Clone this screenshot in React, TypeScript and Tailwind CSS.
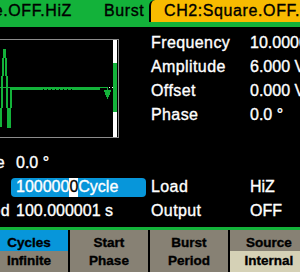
const PARAMS: [string, string][] = [
  ['Frequency', '10.000000 kHz'],
  ['Amplitude', '6.000 Vpp'],
  ['Offset', '0.000 VDC'],
  ['Phase', '0.0 °'],
  ['', ''],
  ['', ''],
  ['Load', 'HiZ'],
  ['Output', 'OFF']
]

function Waveform() {
  // y is page y - 40 (top of the scope box)
  const notches = [0, 1, 2, 3, 4, 5, 6, 7]
  return (
    <svg width="113" height="97" viewBox="0 0 113 97" className="shrink-0" shapeRendering="crispEdges">
      <g fill="#13b23a">
        {/* burst */}
        <rect x="3" y="9" width="3" height="9" />
        <rect x="2" y="18" width="1.5" height="18" />
        <rect x="5" y="18" width="2" height="18" />
        <rect x="1" y="36" width="2" height="32" />
        <rect x="6" y="36" width="2" height="32" />
        <rect x="0" y="68" width="2" height="19" />
        <rect x="7" y="68" width="4" height="20" />
        <rect x="10" y="47" width="2" height="21" />
        {/* baseline */}
        <rect x="0" y="46.5" width="10" height="1.5" />
        <rect x="10" y="47" width="90" height="3" />
        <rect x="100" y="47" width="8" height="1" />
        <rect x="107" y="47" width="1" height="3" />
        {/* trigger marker */}
        <rect x="104" y="50" width="7" height="2" />
        <rect x="105" y="52" width="5" height="3" />
        <rect x="106" y="55" width="3" height="2" />
        <rect x="107" y="57" width="1" height="2" />
      </g>
      <g fill="#000">
        {notches.map((i) => (
          <rect key={i} x={42.7 + i * 4} y="48.6" width="1.3" height="1.4" />
        ))}
      </g>
      <rect x="109" y="47" width="1" height="1" fill="#fff" />
      <rect x="112" y="47" width="1" height="1" fill="#fff" />
    </svg>
  )
}

function SoftKey({
  top,
  bottom,
  topBg,
  bottomBg,
  className = ''
}: {
  top: string
  bottom: string
  topBg: string
  bottomBg: string
  className?: string
}) {
  return (
    <div className={`w-[78px] shrink-0 flex flex-col text-[13.5px] leading-[15px] font-bold text-black text-center ${className}`}>
      <div className={`h-[21px] pt-[4.5px] ${topBg}`}>{top}</div>
      <div className={`flex-1 pt-[1.5px] ${bottomBg}`}>{bottom}</div>
    </div>
  )
}

export default function App() {
  return (
    <div className="w-[300px] h-[272px] overflow-hidden bg-black flex flex-col font-['Liberation_Sans',Arial,sans-serif] [-webkit-text-stroke:0.35px_currentColor]">
      {/* channel bar */}
      <div className="h-[27px] shrink-0 bg-[#13b23a] flex items-start text-[16px] leading-[22px] tracking-[0.6px] text-black">
        <div className="w-[72px] shrink-0 flex justify-end overflow-hidden whitespace-nowrap">
          CH1:Sine.OFF.HiZ
        </div>
        <div className="w-[77px] shrink-0 pl-[32px] whitespace-nowrap">Burst</div>
        <div className="flex-1 min-w-0 h-[22px] bg-[#f8bb00] border-l-2 border-black rounded-tl-[6px] pl-[13px] whitespace-nowrap overflow-hidden">
          CH2:Square.OFF.HiZ
        </div>
      </div>

      {/* main area */}
      <div className="h-[200px] shrink-0 flex text-white text-[16px] leading-[24px]">
        <div className="w-[151px] shrink-0 flex flex-col">
          <div className="mt-[12px] w-[119px] h-[99px] border-y border-r border-[#8c8c8c] flex">
            <Waveform />
            <div className="w-[4px] flex flex-col">
              <div className="h-[23px] bg-white" />
              <div className="h-[49px] bg-[#13b23a]" />
              <div className="flex-1 bg-white" />
            </div>
          </div>

          <div className="mt-[13px] h-[24px] flex whitespace-nowrap">
            <div className="w-[16px] pr-[11px] flex justify-end overflow-hidden tracking-[0.4px]">Start Phase</div>
            <span>0.0 °</span>
          </div>
          <div className="h-[24px] flex items-center">
            <div className="ml-[11px] w-[135px] h-[19px] rounded-[4px] bg-[#0796da] pl-[5px] flex items-stretch whitespace-nowrap overflow-hidden">
              <span className="flex items-center">100000</span>
              <span className="flex items-center bg-white text-black">0</span>
              <span className="flex items-center">Cycle</span>
            </div>
          </div>
          <div className="h-[24px] flex whitespace-nowrap">
            <div className="w-[16px] pr-[6px] flex justify-end overflow-hidden tracking-[0.4px]">Burst Period</div>
            <span>100.000001 s</span>
          </div>
        </div>

        <div className="flex-1 min-w-0 pt-[4px] flex flex-col">
          {PARAMS.map(([label, value], i) => (
            <div key={i} className="h-[24px] flex whitespace-nowrap">
              <span className="w-[99px] shrink-0 tracking-[0.4px]">{label}</span>
              <span>{value}</span>
            </div>
          ))}
        </div>
      </div>

      <div className="h-[3px] shrink-0 bg-[#13b23a]" />

      {/* soft keys */}
      <div className="flex-1 flex gap-[2px] overflow-hidden">
        <SoftKey top="Cycles" bottom="Infinite" topBg="bg-[#0796da]" bottomBg="bg-[#878174]" className="ml-[-10px]" />
        <SoftKey top="Start" bottom="Phase" topBg="bg-[#878174]" bottomBg="bg-[#878174]" />
        <SoftKey top="Burst" bottom="Period" topBg="bg-[#878174]" bottomBg="bg-[#878174]" />
        <SoftKey top="Source" bottom="Internal" topBg="bg-[#878174]" bottomBg="bg-[#d5d1b6]" />
      </div>
    </div>
  )
}
